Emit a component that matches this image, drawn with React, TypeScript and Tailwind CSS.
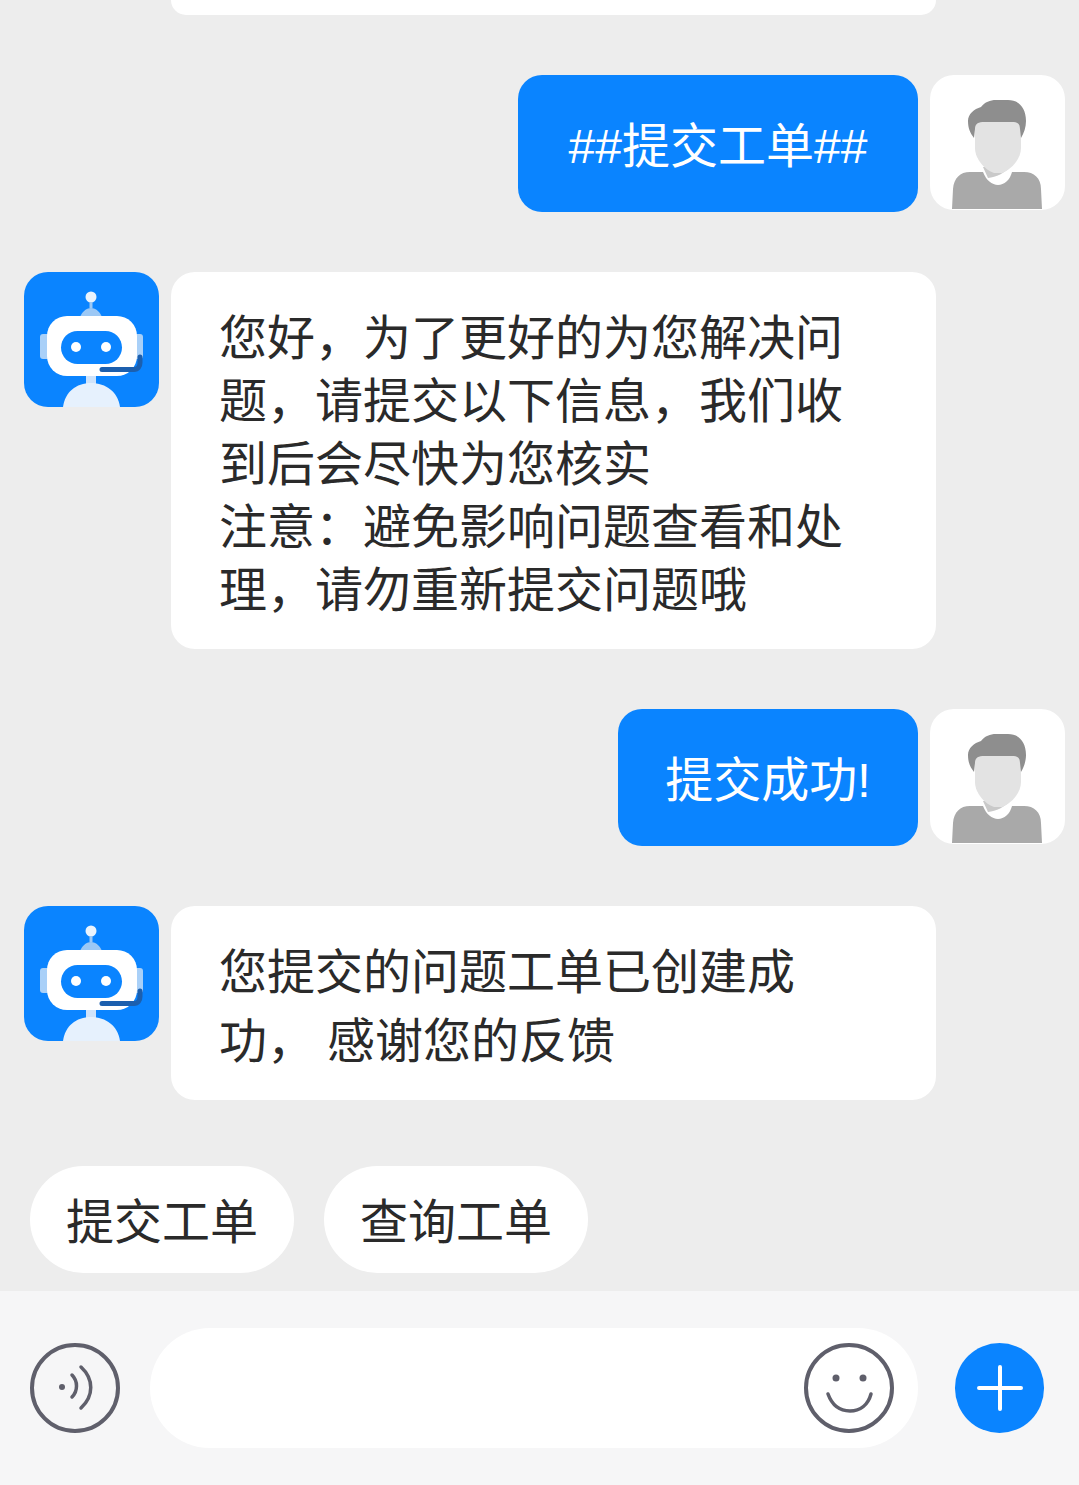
import React from 'react';

const BotAvatar = () => (
    <div className="w-[135px] h-[135px] shrink-0 rounded-[24px] bg-[#0a84ff] overflow-hidden">
        <svg viewBox="0 0 135 135" className="w-full h-full">
            <circle cx="67" cy="25" r="5.5" fill="#eaf3fd" />
            <path d="M65.5 30h3v6h-3z" fill="#9cc8f5" />
            <path d="M56 45c2-5 6-9 11-9s9 4 11 9z" fill="#9cc8f5" />
            <rect x="16" y="62" width="10" height="25" rx="3" fill="#a9d0f8" />
            <rect x="109" y="62" width="10" height="25" rx="3" fill="#a9d0f8" />
            <rect x="23" y="44" width="90" height="60" rx="20" fill="#ffffff" />
            <rect x="37" y="59" width="61" height="33" rx="16.5" fill="#0a84ff" />
            <circle cx="52" cy="75" r="5" fill="#ffffff" />
            <circle cx="82" cy="75" r="5" fill="#ffffff" />
            <path d="M78 97.5h32c4 0 6-3 6-7V85" stroke="#1c5fae" strokeWidth="5" strokeLinecap="round" fill="none" />
            <rect x="62" y="104" width="10" height="9" fill="#cfe3fa" />
            <path d="M39 135c2-15 13-24 28-24s27 9 29 24z" fill="#e6f1fd" />
        </svg>
    </div>
);

const UserAvatar = () => (
    <div className="w-[135px] h-[135px] shrink-0 rounded-[24px] bg-white overflow-hidden">
        <svg viewBox="0 0 135 135" className="w-full h-full">
            <path d="M22 134l1-20c1-11 7-17 17-17h54c10 0 17 6 17 17l1 20z" fill="#a9a9a9" />
            <path d="M53 97h29c-2 8-8 13-14 13s-12-5-15-13z" fill="#ffffff" />
            <path d="M53 92h27c-5 6-14 10-22 11z" fill="#c9c9c9" />
            <path d="M45 40h46v33c0 11-10 22-19 25h-8c-9-3-19-14-19-25z" fill="#e3e3e3" />
            <path d="M44 63c-4-5-6-10-6-17 0-7 6-12 13-14 4-5 9-7 15-7h12c11 0 18 8 18 21 0 6-2 12-5 17l-1-9c0-6-3-7-8-7H54c-5 0-9 1-9 7z" fill="#8e8e8e" />
        </svg>
    </div>
);

const UserMessage = ({ text, width }: { text: string; width: string }) => (
    <div className="flex justify-end items-start gap-3 pr-[14px]">
        <div className={`h-[137px] pt-[6px] flex items-center justify-center rounded-[24px] bg-[#0a84ff] text-white text-[48px] leading-[63px] ${width}`}>
            {text}
        </div>
        <UserAvatar />
    </div>
);

const BotMessage = ({ lines, leading, py }: { lines: string[]; leading: string; py: string }) => (
    <div className="flex items-start gap-3 pl-6">
        <BotAvatar />
        <div className={`w-[765px] px-12 rounded-[24px] bg-white text-[#2a2a2a] text-[48px] font-['Roboto','Noto_Sans_CJK_SC',sans-serif] ${leading} ${py}`}>
            {lines.map((line) => (
                <div key={line} className="whitespace-pre">{line}</div>
            ))}
        </div>
    </div>
);

export default function App() {
    return (
        <div className="w-[1079px] h-[1485px] flex flex-col overflow-hidden bg-[#ededed] font-['Liberation_Sans','Noto_Sans_CJK_SC',sans-serif] font-normal">
            <div className="flex-1 flex flex-col gap-[60px]">
                <div className="ml-[171px] w-[765px] h-[15px] bg-white rounded-b-[24px]"></div>
                <UserMessage text="##提交工单##" width="w-[400px]" />
                <BotMessage
                    leading="leading-[63px]"
                    py="pt-[35px] pb-[27px]"
                    lines={[
                        '您好，为了更好的为您解决问',
                        '题，请提交以下信息，我们收',
                        '到后会尽快为您核实',
                        '注意：避免影响问题查看和处',
                        '理，请勿重新提交问题哦',
                    ]}
                />
                <UserMessage text="提交成功!" width="w-[300px]" />
                <BotMessage
                    leading="leading-[69px]"
                    py="pt-[32px] pb-[24px]"
                    lines={['您提交的问题工单已创建成', '功， 感谢您的反馈']}
                />
                <div className="flex gap-[30px] pl-[30px] mt-[6px]">
                    <div className="h-[107px] px-9 pt-[6px] flex items-center rounded-full bg-white text-[#2a2a2a] text-[48px]">提交工单</div>
                    <div className="h-[107px] px-9 pt-[6px] flex items-center rounded-full bg-white text-[#2a2a2a] text-[48px]">查询工单</div>
                </div>
            </div>

            {/* Bottom input bar */}
            <div className="h-[194px] shrink-0 bg-[#f6f6f7] flex items-start pt-[37px]">
                <div className="ml-[30px] mt-[15px] w-[90px] h-[90px] shrink-0">
                    <svg viewBox="0 0 90 90" className="w-full h-full" fill="none" stroke="#5f5f6b">
                        <circle cx="45" cy="45" r="43" strokeWidth="4" />
                        <circle cx="32" cy="44" r="3" fill="#5f5f6b" stroke="none" />
                        <path d="M42 32c6 6 6 16 0 22" strokeWidth="3.5" strokeLinecap="round" />
                        <path d="M51 24c13 12 13 29 0 41" strokeWidth="3.5" strokeLinecap="round" />
                    </svg>
                </div>
                <div className="ml-[30px] w-[768px] h-[120px] shrink-0 rounded-full bg-white flex items-center justify-end pr-6">
                    <svg viewBox="0 0 90 90" className="w-[90px] h-[90px]" fill="none" stroke="#5f5f6b">
                        <circle cx="45" cy="45" r="43" strokeWidth="4" />
                        <circle cx="32" cy="35" r="3.5" fill="#5f5f6b" stroke="none" />
                        <circle cx="59" cy="35" r="3.5" fill="#5f5f6b" stroke="none" />
                        <path d="M24 51c4 11 12 17 22 17s18-6 21-17" strokeWidth="3.5" strokeLinecap="round" />
                    </svg>
                </div>
                <div className="ml-[37px] mt-[15px] w-[89px] h-[90px] shrink-0 rounded-full bg-[#0a84ff] flex items-center justify-center">
                    <svg viewBox="0 0 46 46" className="w-[46px] h-[46px]" stroke="#ffffff" strokeWidth="4" strokeLinecap="round">
                        <path d="M23 2v42M2 23h42" />
                    </svg>
                </div>
            </div>
        </div>
    );
}
